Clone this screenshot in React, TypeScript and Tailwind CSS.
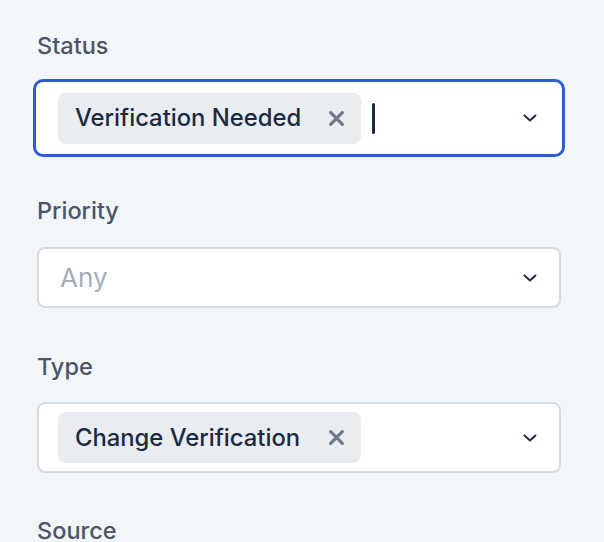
import React from "react";

const Chevron = () => (
  <svg width="14" height="8" viewBox="0 0 14 8" fill="none" className="shrink-0">
    <path d="M1.5 1.5 L7 6.5 L12.5 1.5" stroke="#1c2e45" strokeWidth="2" strokeLinecap="round" strokeLinejoin="round" />
  </svg>
);

const XIcon = () => (
  <svg width="17" height="17" viewBox="0 0 16 16" fill="none" className="shrink-0">
    <path d="M2.5 2.5 L13.5 13.5 M13.5 2.5 L2.5 13.5" stroke="#6e7a87" strokeWidth="3" strokeLinecap="round" />
  </svg>
);

const Chip = ({ text }: { text: string }) => (
  <div className="flex h-[51px] w-[303px] items-center justify-between rounded-[8px] bg-[#e9edf1] pl-[17px] pr-[16px]">
    <span className="text-[23.8px] font-medium leading-none text-[#1a2b42]">{text}</span>
    <XIcon />
  </div>
);

export default function App() {
  return (
    <div
      className="min-h-[542px] w-[604px] bg-[#f3f6f9] pl-[37px] pt-[32px]"
      style={{ fontFamily: "Inter, 'Noto Sans', sans-serif" }}
    >
      <div className="flex w-[524px] flex-col">
        <label className="text-[23.5px] font-medium leading-[28px] text-[#4a5568]">Status</label>
        <div className="-mx-[4px] mt-[19px] flex h-[78px] items-center rounded-[10px] border-[3px] border-[#2c5fcc] bg-white pl-[22px] pr-[25px]">
          <Chip text="Verification Needed" />
          <div className="ml-[11px] h-[31px] w-[3px] rounded-full bg-[#1a2b42]" />
          <div className="flex-1" />
          <Chevron />
        </div>

        <label className="mt-[40px] text-[23.5px] font-medium leading-[28px] text-[#4a5568]">Priority</label>
        <div className="mt-[22px] flex h-[61px] items-center rounded-[8px] border-2 border-[#d3dbe4] bg-white pl-[21px] pr-[22px]">
          <span className="flex-1 text-[26px] leading-none text-[#a3aebb]">Any</span>
          <Chevron />
        </div>

        <label className="mt-[45px] text-[23.5px] font-medium leading-[28px] text-[#4a5568]">Type</label>
        <div className="mt-[21px] flex h-[71px] items-center rounded-[8px] border-2 border-[#d3dbe4] bg-white pl-[19px] pr-[22px]">
          <Chip text="Change Verification" />
          <div className="flex-1" />
          <Chevron />
        </div>

        <label className="mt-[44px] text-[23.5px] font-medium leading-[28px] text-[#4a5568]">Source</label>
      </div>
    </div>
  );
}
